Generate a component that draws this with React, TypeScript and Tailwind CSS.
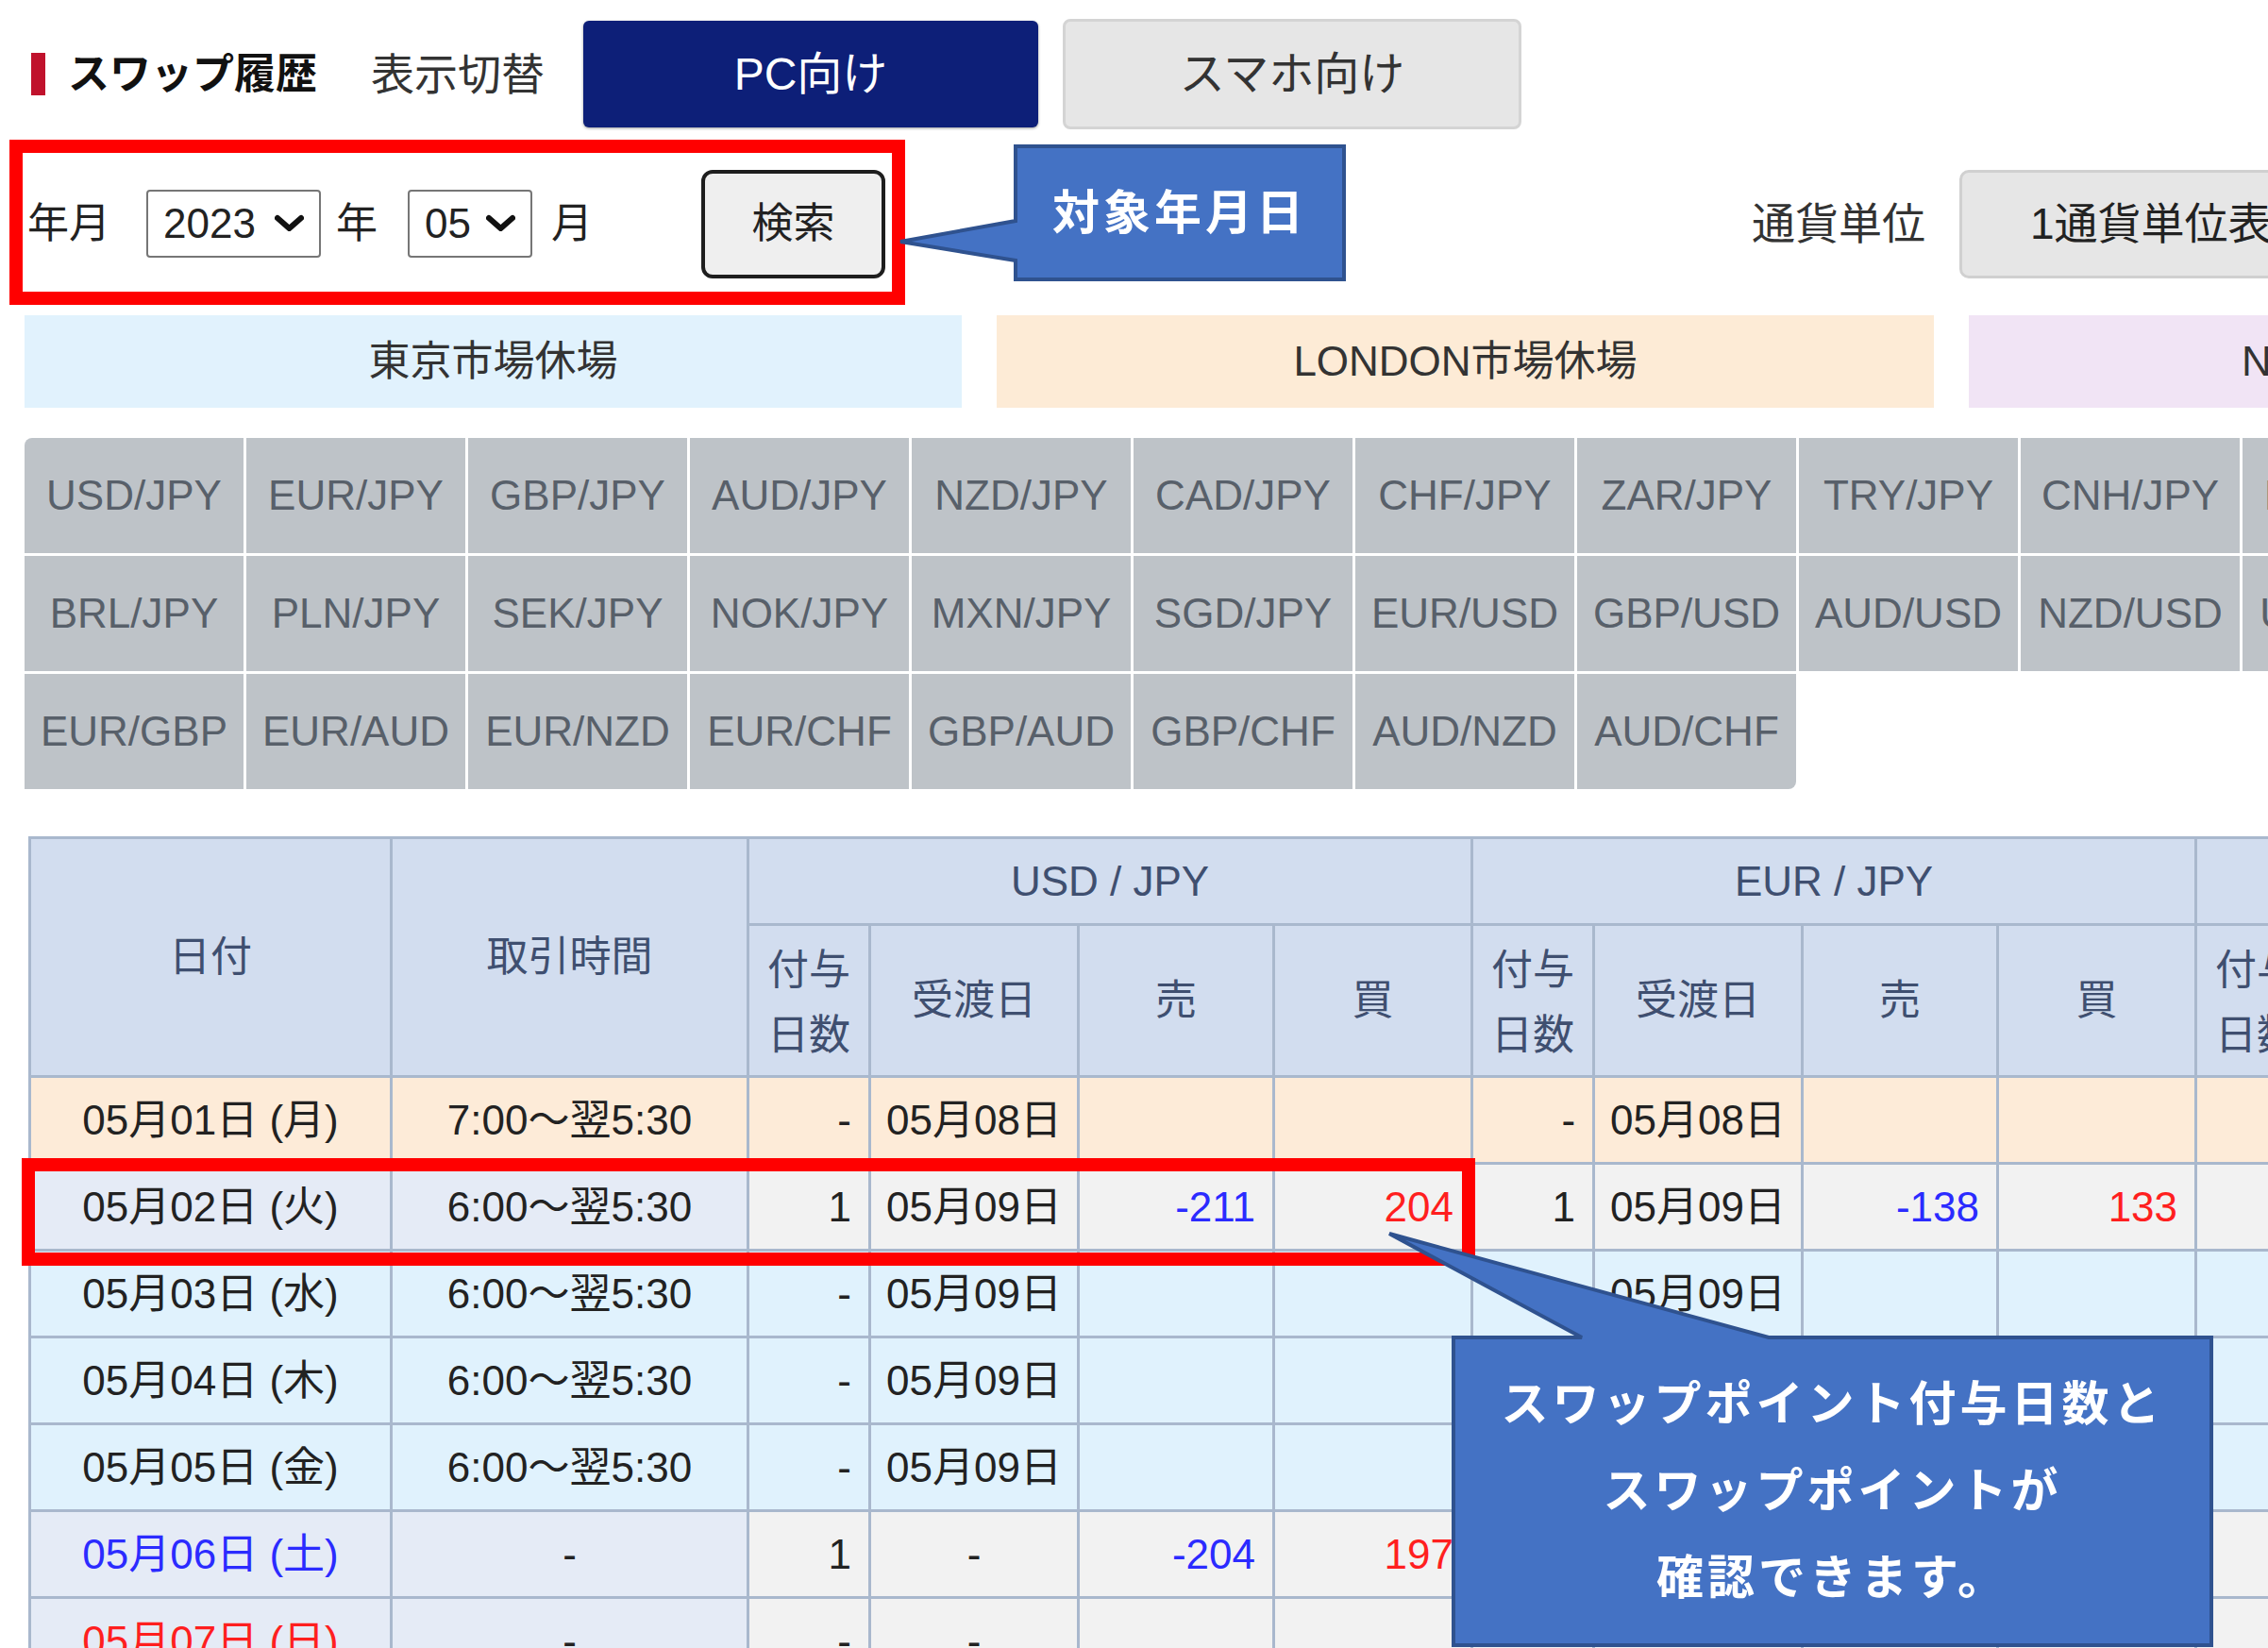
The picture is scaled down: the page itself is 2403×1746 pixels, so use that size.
import React from "react";

const pairs = [
  "USD/JPY","EUR/JPY","GBP/JPY","AUD/JPY","NZD/JPY","CAD/JPY","CHF/JPY","ZAR/JPY","TRY/JPY","CNH/JPY","HKD/JPY",
  "BRL/JPY","PLN/JPY","SEK/JPY","NOK/JPY","MXN/JPY","SGD/JPY","EUR/USD","GBP/USD","AUD/USD","NZD/USD","USD/CHF",
  "EUR/GBP","EUR/AUD","EUR/NZD","EUR/CHF","GBP/AUD","GBP/CHF","AUD/NZD","AUD/CHF",
];

type Kind = "peach" | "gray" | "blue";
type Row = { date: string; dateCls: string; time: string; kind: Kind; groups: string[][] };

const rows: Row[] = [
  { date: "05月01日 (月)", dateCls: "text-[#222]", time: "7:00〜翌5:30", kind: "peach",
    groups: [["-", "05月08日", "", ""], ["-", "05月08日", "", ""], ["-", "05月08日", "", ""]] },
  { date: "05月02日 (火)", dateCls: "text-[#222]", time: "6:00〜翌5:30", kind: "gray",
    groups: [["1", "05月09日", "-211", "204"], ["1", "05月09日", "-138", "133"], ["1", "05月09日", "-250", "240"]] },
  { date: "05月03日 (水)", dateCls: "text-[#222]", time: "6:00〜翌5:30", kind: "blue",
    groups: [["-", "05月09日", "", ""], ["-", "05月09日", "", ""], ["-", "05月09日", "", ""]] },
  { date: "05月04日 (木)", dateCls: "text-[#222]", time: "6:00〜翌5:30", kind: "blue",
    groups: [["-", "05月09日", "", ""], ["-", "05月09日", "", ""], ["-", "05月09日", "", ""]] },
  { date: "05月05日 (金)", dateCls: "text-[#222]", time: "6:00〜翌5:30", kind: "blue",
    groups: [["-", "05月09日", "", ""], ["-", "05月09日", "", ""], ["-", "05月09日", "", ""]] },
  { date: "05月06日 (土)", dateCls: "text-[#2b2bff]", time: "-", kind: "gray",
    groups: [["1", "-", "-204", "197"], ["1", "-", "-138", "133"], ["1", "-", "-250", "240"]] },
  { date: "05月07日 (日)", dateCls: "text-[#ff1f1f]", time: "-", kind: "gray",
    groups: [["-", "-", "", ""], ["-", "-", "", ""], ["-", "-", "", ""]] },
];

function dateBg(k: Kind) {
  if (k === "peach") return "bg-[#fdebd8]";
  if (k === "blue") return "bg-[#e0f2fd]";
  return "bg-[#e5ebf6]";
}
function dataBg(k: Kind) {
  if (k === "peach") return "bg-[#fdebd8]";
  if (k === "blue") return "bg-[#e0f2fd]";
  return "bg-[#f2f2f2]";
}

function Sel({ value, cls }: { value: string; cls: string }) {
  return (
    <div className={`${cls} shrink-0 h-[72px] border-2 border-[#767676] rounded-[4px] flex items-center justify-between pl-[16px] pr-[16px] bg-white`}>
      <span className="text-[44px] leading-none">{value}</span>
      <svg width="31" height="20" viewBox="0 0 31 20">
        <path d="M3 4 L15.5 15 L28 4" fill="none" stroke="#111" strokeWidth="6" strokeLinejoin="round" strokeLinecap="round" />
      </svg>
    </div>
  );
}

const thBase = "border-[3px] border-[#a9b8cd] bg-[#d2ddef] text-[#3f4f70] font-normal text-center align-middle text-[44px]";
const th = `${thBase} leading-none`;
const td = "border-[3px] border-[#a9b8cd] text-[44px] leading-none align-middle h-[92px]";

export default function App() {
  const groups = ["USD / JPY", "EUR / JPY", "GBP / JPY"];
  const colW = [383, 378];
  const gW = [129, 221, 207, 210];
  return (
    <div className="relative w-[2403px] h-[1746px] overflow-hidden bg-white text-[#222] font-['Liberation_Sans','Noto_Sans_CJK_JP',sans-serif]">
      {/* Title row */}
      <div className="flex items-center h-[157px] w-max">
        <div className="ml-[33px] w-[15px] h-[45px] bg-[#c0122c] shrink-0" />
        <div className="ml-[24px] w-[321px] shrink-0 text-[44px] font-bold leading-none text-[#111]">スワップ履歴</div>
        <div className="w-[225px] shrink-0 text-[46px] leading-none text-[#333]">表示切替</div>
        <div className="w-[482px] h-[113px] shrink-0 rounded-[6px] bg-[#0d1f78] text-white text-[48px] leading-none flex items-center justify-center shadow-[0_1px_3px_rgba(0,0,0,0.4)]">PC向け</div>
        <div className="ml-[26px] w-[486px] h-[117px] shrink-0 rounded-[8px] bg-[#e6e6e6] border-[3px] border-[#d4d4d4] text-[#333] text-[48px] leading-none flex items-center justify-center">スマホ向け</div>
      </div>

      {/* Search row */}
      <div className="flex items-center h-[160px] w-max text-[44px] leading-none">
        <span className="ml-[29px] shrink-0">年月</span>
        <Sel value="2023" cls="ml-[38px] w-[185px]" />
        <span className="ml-[16px] shrink-0">年</span>
        <Sel value="05" cls="ml-[32px] w-[132px]" />
        <span className="ml-[20px] shrink-0">月</span>
        <div className="ml-[115px] w-[195px] h-[115px] shrink-0 rounded-[12px] border-[4px] border-[#1e1e1e] bg-[#efefef] flex items-center justify-center">検索</div>
        <span className="ml-[918px] shrink-0 text-[46px] text-[#333]">通貨単位</span>
        <div className="ml-[36px] w-[700px] h-[115px] shrink-0 rounded-[10px] bg-[#e6e6e6] border-[3px] border-[#d0d0d0] flex items-center pl-[72px] text-[46px]">1通貨単位表示</div>
      </div>

      {/* Market holidays */}
      <div className="mt-[17px] flex gap-[37px] pl-[26px] w-max text-[44px] leading-none text-[#333]">
        <div className="w-[993px] h-[98px] bg-[#e1f2fd] flex items-center justify-center">東京市場休場</div>
        <div className="w-[993px] h-[98px] bg-[#fdebd6] flex items-center justify-center">LONDON市場休場</div>
        <div className="w-[993px] h-[98px] bg-[#f1e4f5] flex items-center justify-center">NEW YORK市場休場</div>
      </div>

      {/* Currency pairs */}
      <div className="mt-[32px] pl-[26px] w-max grid grid-cols-[repeat(11,232px)] gap-[3px]">
        {pairs.map((p, i) => (
          <div
            key={p}
            className={`h-[122px] bg-[#bec3c8] text-[#58606a] text-[44px] leading-none flex items-center justify-center ${i === 0 ? "rounded-tl-[8px]" : ""} ${i === pairs.length - 1 ? "rounded-br-[8px]" : ""}`}
          >
            {p}
          </div>
        ))}
      </div>

      {/* Table */}
      <div className="mt-[50px] ml-[30px] w-max">
        <table className="border-collapse table-fixed w-[3056px]">
          <colgroup>
            {colW.map((w, i) => <col key={"c" + i} style={{ width: w }} />)}
            {groups.map((g) => gW.map((w, j) => <col key={g + j} style={{ width: w }} />))}
          </colgroup>
          <thead>
            <tr>
              <th rowSpan={2} className={th}>日付</th>
              <th rowSpan={2} className={th}>取引時間</th>
              {groups.map((g, i) => (
                <th key={g} colSpan={4} className={`${th} h-[92px]`}>{i < 2 ? g : ""}</th>
              ))}
            </tr>
            <tr>
              {groups.map((g) => (
                <React.Fragment key={g}>
                  <th className={`${thBase} h-[161px] leading-[69px] pt-[4px]`}>付与<br />日数</th>
                  <th className={th}>受渡日</th>
                  <th className={th}>売</th>
                  <th className={th}>買</th>
                </React.Fragment>
              ))}
            </tr>
          </thead>
          <tbody>
            {rows.map((r) => (
              <tr key={r.date}>
                <td className={`${td} ${dateBg(r.kind)} ${r.dateCls} text-center`}>{r.date}</td>
                <td className={`${td} ${dateBg(r.kind)} text-center`}>{r.time}</td>
                {r.groups.map((g, gi) => (
                  <React.Fragment key={gi}>
                    <td className={`${td} ${dataBg(r.kind)} text-right pr-[18px]`}>{g[0]}</td>
                    <td className={`${td} ${dataBg(r.kind)} text-center`}>{g[1]}</td>
                    <td className={`${td} ${dataBg(r.kind)} text-right pr-[18px] text-[#2b2bff]`}>{g[2]}</td>
                    <td className={`${td} ${dataBg(r.kind)} text-right pr-[18px] text-[#ff1f1f]`}>{g[3]}</td>
                  </React.Fragment>
                ))}
              </tr>
            ))}
          </tbody>
        </table>
      </div>

      {/* Annotation: red frame 1 */}
      <div className="absolute left-[10px] top-[148px] w-[949px] h-[175px] border-[14px] border-[#ff0000]" />

      {/* Callout 1 */}
      <svg className="absolute left-[940px] top-[140px]" width="500" height="170" viewBox="0 0 500 170">
        <path d="M136 15 L484 15 L484 156 L136 156 L136 136 L14 116 L136 94 Z" fill="#4472c4" stroke="#2f528f" strokeWidth="4" strokeLinejoin="miter" />
      </svg>
      <div className="absolute left-[1076px] top-[155px] w-[348px] h-[141px] flex items-center justify-center text-white font-bold text-[50px] leading-none tracking-[4px]">
        対象年月日
      </div>

      {/* Annotation: red frame 2 */}
      <div className="absolute left-[23px] top-[1227px] w-[1540px] h-[114px] border-[14px] border-[#ff0000]" />

      {/* Callout 2 */}
      <svg className="absolute left-[1460px] top-[1300px]" width="900" height="446" viewBox="0 0 900 446">
        <path d="M80 117 L216 117 L12 7 L414 117 L883 117 L883 443 L80 443 Z" fill="#4472c4" stroke="#2f528f" strokeWidth="4" strokeLinejoin="miter" />
      </svg>
      <div className="absolute left-[1540px] top-[1417px] w-[803px] h-[326px] flex flex-col items-center justify-center text-white font-bold text-[50px] leading-[92px] tracking-[4px]">
        <div>スワップポイント付与日数と</div>
        <div>スワップポイントが</div>
        <div>確認できます。</div>
      </div>
    </div>
  );
}
